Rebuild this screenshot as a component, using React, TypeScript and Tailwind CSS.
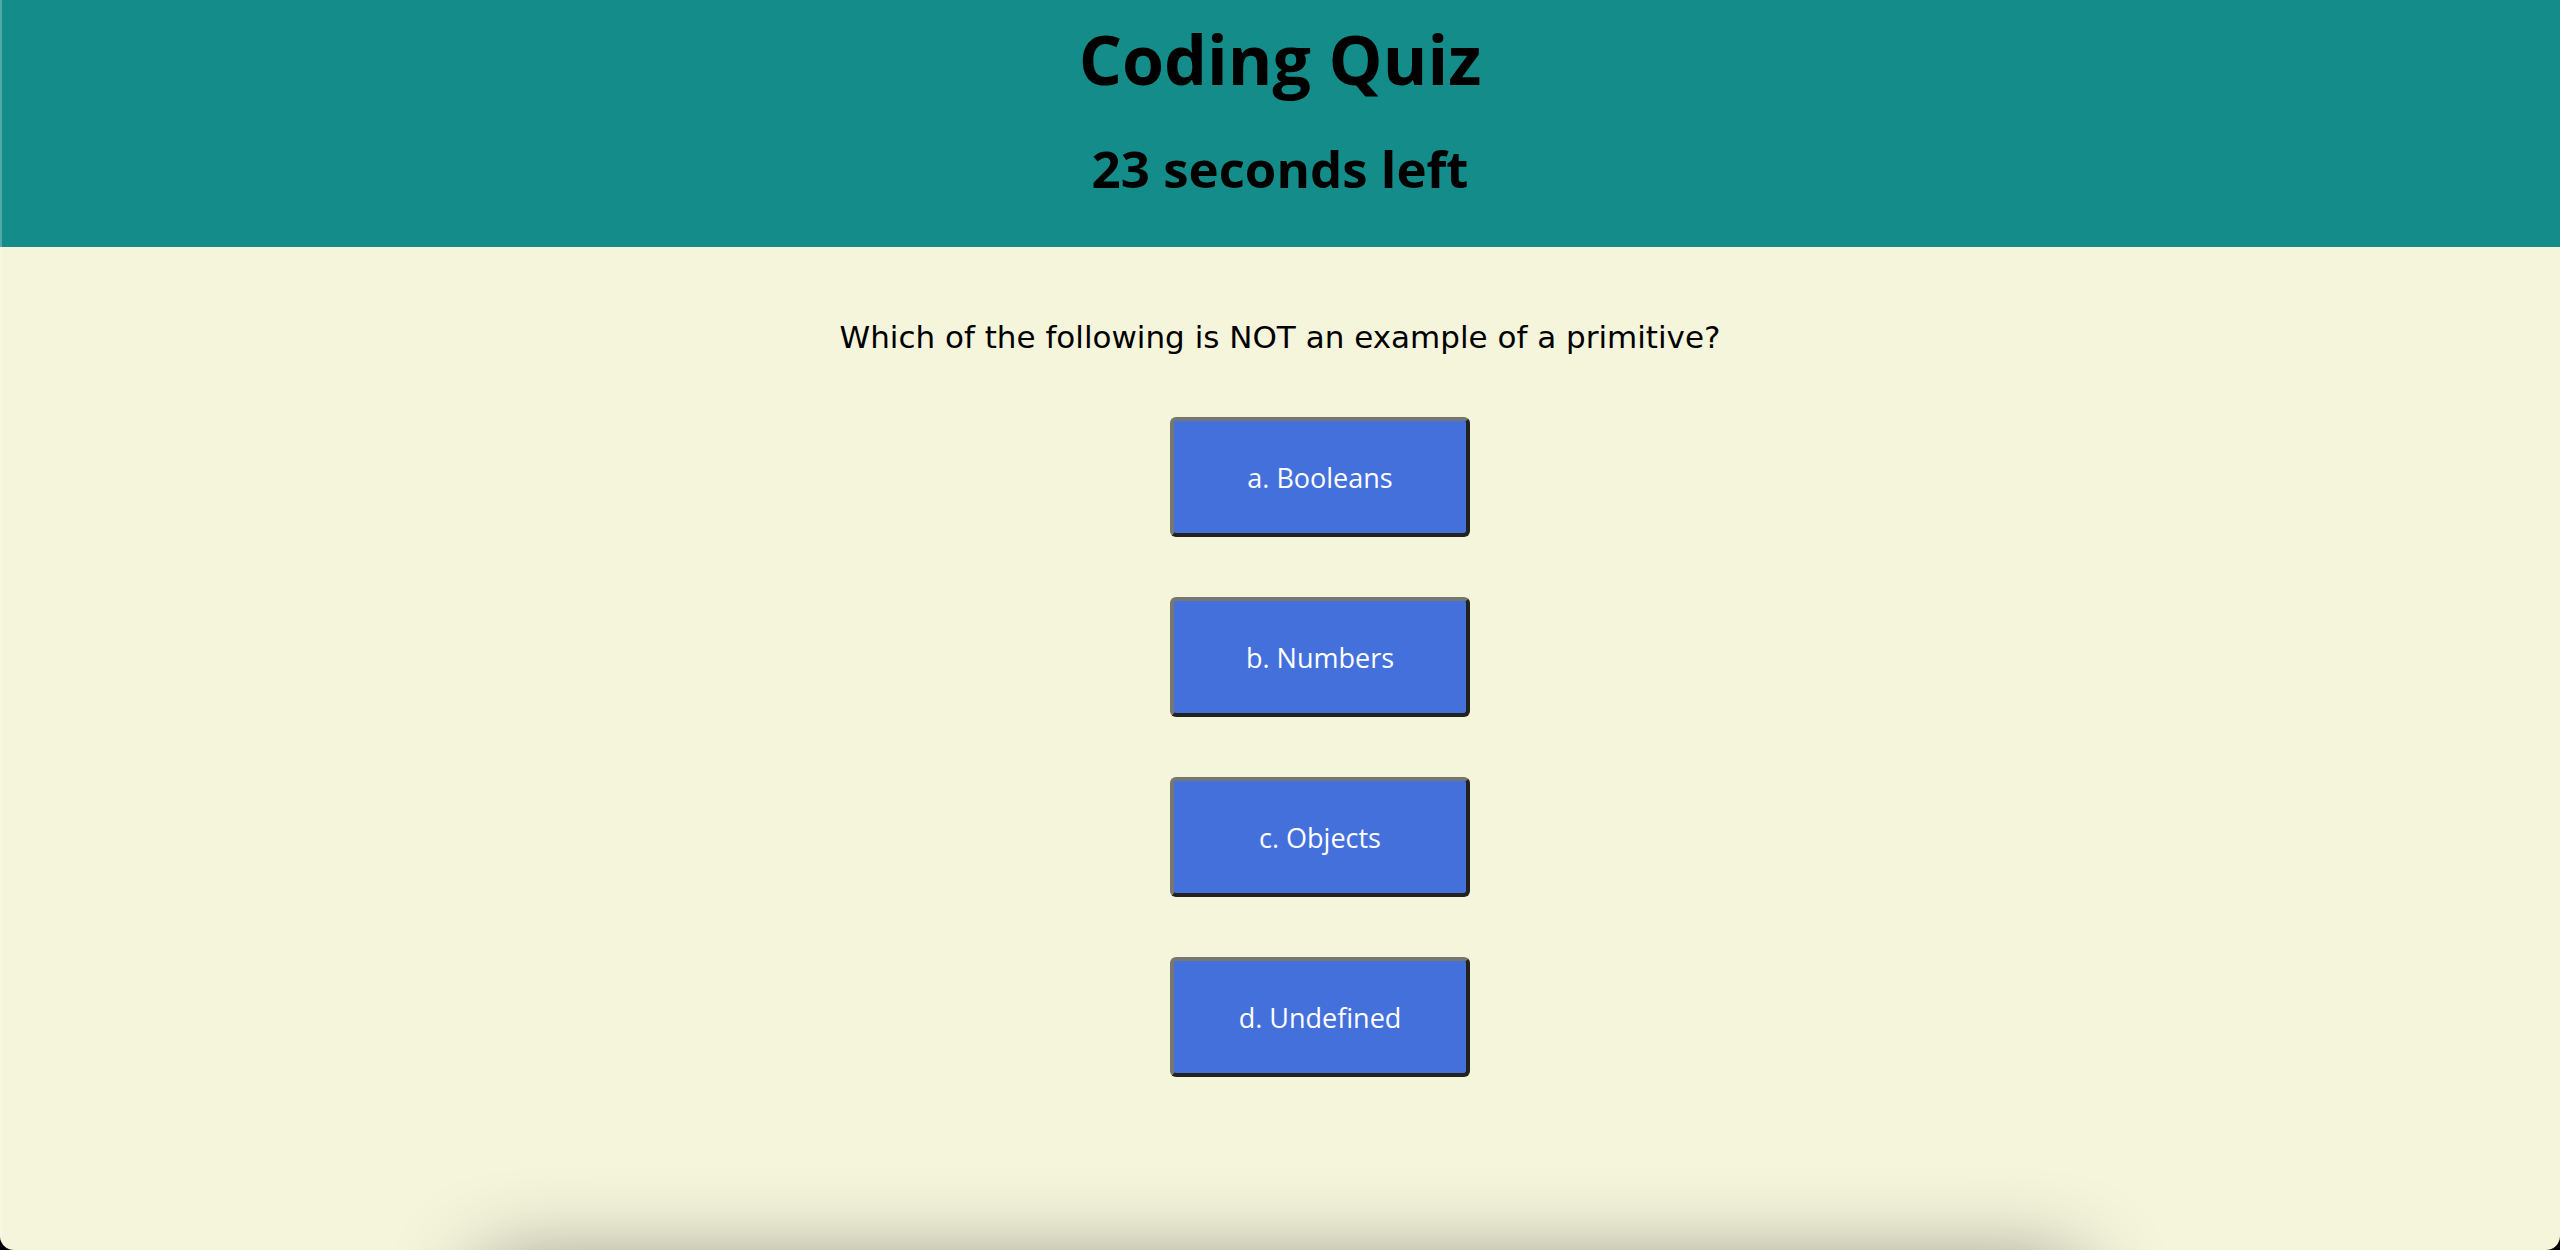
const answers = ["a. Booleans", "b. Numbers", "c. Objects", "d. Undefined"];

export default function App() {
  return (
    <div className="h-[1250px] w-full bg-black font-['Open_Sans',sans-serif]">
      <div className="relative flex h-full flex-col items-center overflow-hidden rounded-b-[14px] bg-[#f5f5dc] text-black">
        {/* window edge highlight */}
        <div className="absolute inset-y-0 left-0 w-[2px] bg-white/25" />

        <header className="flex h-[247px] w-full shrink-0 flex-col items-center bg-[#138c8a]">
          <h1 className="pt-[25px] text-[68px] font-bold leading-none">Coding Quiz</h1>
          <h2 className="mt-[50px] text-[51px] font-bold leading-none">23 seconds left</h2>
        </header>

        <main className="flex flex-col items-center">
          <p className="mt-[75px] font-['DejaVu_Sans',sans-serif] text-[31px] leading-none">
            Which of the following is NOT an example of a primitive?
          </p>
          <div className="ml-[80px] mt-[64px] flex flex-col gap-[60px]">
            {answers.map((a) => (
              <button
                key={a}
                className="flex h-[120px] w-[300px] items-center justify-center rounded-[6px] border-4 border-t-[#777771] border-l-[#777771] border-b-[#22221f] border-r-[#22221f] bg-[#4470dc] text-[27px] leading-none text-white"
              >
                {a}
              </button>
            ))}
          </div>
        </main>

        {/* card sitting below the fold, only its shadow shows */}
        <div className="mt-[190px] h-[300px] w-[1600px] shrink-0 rounded-[20px] bg-[#f5f5dc] shadow-[0_0_90px_rgba(0,0,0,0.45)]" />
      </div>
    </div>
  );
}
